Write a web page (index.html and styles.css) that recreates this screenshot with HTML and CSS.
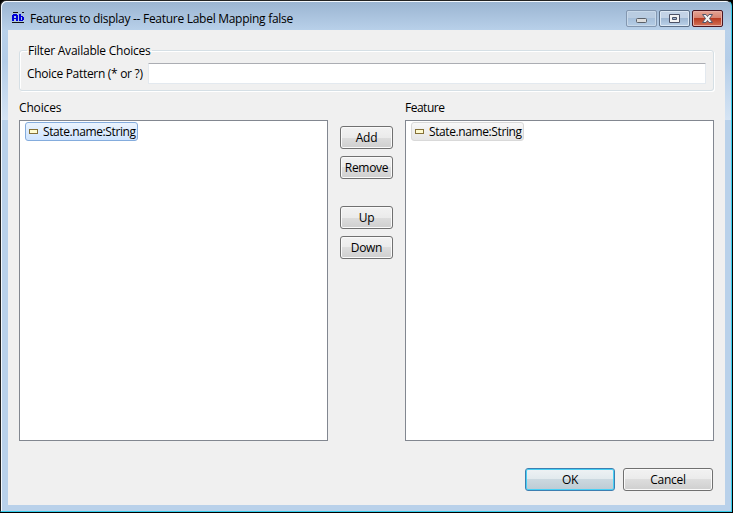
FILE: index.html
```html
<!DOCTYPE html>
<html lang="en">
<head>
<meta charset="utf-8">
<title>Features to display</title>
<link rel="stylesheet" href="styles.css">
</head>
<body>
<div class="window">
  <header class="titlebar">
    <svg class="app-icon" width="13" height="11" viewBox="0 0 13 11" shape-rendering="crispEdges">
      <path d="M1 .5h5M10 .5h2M0 10.500h12" stroke="#111" fill="none"/>
      <path d="M1 2h4v1h1v6h-2v-2h-2v2h-2v-6h1zM2 4v2h2v-2zM7 2h2v2h2v1h1v3h-1v1h-4zM9 5v3h1v-3z" fill="#0000d8" fill-rule="evenodd"/>
    </svg>
    <span class="t-title">Features to display -- Feature Label Mapping false</span>
    <div class="controls">
      <div class="ctl ctl-min"><svg width="29" height="15" viewBox="0 0 29 15"><rect x="9.500" y="7.500" width="10" height="4" rx="1" fill="#ddd" stroke="#5a6068"/></svg></div>
      <div class="ctl"><svg width="29" height="15" viewBox="0 0 29 15"><path d="M9.500 3.500h10v8h-10zM12.500 6.500v2h4v-2z" fill="#f4f4f4" stroke="#4c5266" fill-rule="evenodd"/></svg></div>
      <div class="ctl ctl-close"><svg width="29" height="15" viewBox="0 0 29 15"><path d="M9.500 3.500h3.500l1.500 2 1.500-2h3.500l-3 4 3 4h-3.500l-1.500-2-1.500 2h-3.500l3-4z" fill="#f2f2f2" stroke="#54566a"/></svg></div>
    </div>
  </header>
  <main class="client">
    <fieldset class="filter">
      <legend><span class="t-legend">Filter Available Choices</span></legend>
      <label class="filter-row"><span class="t-pattern">Choice Pattern (* or ?)</span><input type="text"></label>
    </fieldset>
    <div class="lists">
      <section class="col">
        <div class="caption"><span class="t-choices">Choices</span></div>
        <div class="list"><div class="item item-active"><i class="attr"></i><span class="t-item">State.name:String</span></div></div>
      </section>
      <div class="actions">
        <button class="btn"><span class="t-add">Add</span></button>
        <button class="btn"><span class="t-remove">Remove</span></button>
        <button class="btn btn-up"><span class="t-up">Up</span></button>
        <button class="btn"><span class="t-down">Down</span></button>
      </div>
      <section class="col">
        <div class="caption"><span class="t-feature">Feature</span></div>
        <div class="list"><div class="item"><i class="attr"></i><span class="t-item">State.name:String</span></div></div>
      </section>
    </div>
    <footer class="footer">
      <button class="btn btn-default"><span class="t-ok">OK</span></button>
      <button class="btn"><span class="t-cancel">Cancel</span></button>
    </footer>
  </main>
</div>
</body>
</html>
```
FILE: styles.css
```css
* { box-sizing: border-box; }
body { margin: 0; background: #000; overflow: hidden; font: 12px/16px "Open Sans", "Noto Sans", sans-serif; letter-spacing: -0.3px; color: #000; }
span { white-space: nowrap; }
.window { width: 732px; height: 512px; border: 1px solid #222; border-right-color: #35cdeb; border-bottom-color: #35cdeb; border-radius: 6px 6px 0 0; padding: 0 6px 6px; background: linear-gradient(#9ab4d1, #b9d1ea 30px, #b4cde8 60px, #d5e4f4 119px, #b9d1ea 119px); box-shadow: inset 1px 1px #f3f8fd; }
.titlebar { height: 29px; display: flex; align-items: flex-start; padding: 9px 2px 0 5px; }
.app-icon { margin: 2px 5px 0 0; }
.t-title { line-height: 18px; letter-spacing: -0.28px; }
.controls { display: flex; gap: 2px; margin-left: auto; }
.ctl { width: 31px; height: 17px; border: 1px solid #5d7088; border-radius: 2px; background: linear-gradient(#c3d3e6 50%, #9fb8d3 50%, #bbd2e9); box-shadow: inset 0 0 0 1px #dce8f4; }
.ctl svg { display: block; }
.ctl-min { border-color: #8397b0; background: linear-gradient(#b9cce1 50%, #a6bfda 50%, #b5cde6); box-shadow: inset 0 0 0 1px #c8d9ea; }
.ctl-close { border-color: #4b1520; background: linear-gradient(#e5a595, #d7806e 50%, #b93c22 50%, #d27258); box-shadow: inset 0 0 0 1px #e8aea4; }
.client { margin-left: 1px; width: 717px; height: 475px; background: #f0f0f0; padding: 13px 11px 0; }
.filter { margin: 0; height: 48px; border: 1px solid #d5dfe5; border-radius: 3px; padding: 5px 7px 0; box-shadow: inset 1px 1px #fff, 1px 1px #fff; }
legend { height: 15px; line-height: 16px; padding: 0 1px; letter-spacing: -0.22px; }
.filter-row { display: flex; align-items: center; }
.filter-row input { flex: 1; margin-left: 5px; height: 21px; border: 1px solid #e3e9ef; border-top-color: #abadb3; border-radius: 1px; padding: 0; background: #fff; }
.lists { display: flex; margin-top: 8px; }
.col { width: 309px; }
.caption { height: 21px; padding-top: 1px; }
.t-choices { letter-spacing: -0.15px; }
.t-feature { letter-spacing: -0.5px; }
.t-item { letter-spacing: -0.4px; }
.list { height: 321px; border: 1px solid #828790; background: #fff; padding: 1px 5px; }
.item { width: 113px; height: 19px; display: flex; align-items: center; border: 1px solid #d9d9d9; border-radius: 3px; background: linear-gradient(#f8f8f8, #e6e6e6); padding-left: 3px; }
.item-active { border-color: #84acdd; background: linear-gradient(#ebf4fe, #cfe4fe); }
.attr { width: 9px; height: 5px; border: 1px solid #857138; background: #fffbd0; margin-right: 5px; }
.actions { width: 53px; margin: 27px 12px 0; display: flex; flex-direction: column; gap: 7px; }
.btn { height: 23px; border: 1px solid #707070; border-radius: 3px; padding: 0; font: inherit; letter-spacing: inherit; color: #000; background: linear-gradient(#f2f2f2, #ebebeb 50%, #ddd 50%, #cfcfcf); box-shadow: inset 0 0 0 1px #fafafa; }
.btn-up { margin-top: 20px; }
.footer { display: flex; justify-content: flex-end; gap: 8px; margin: 27px 1px 0 0; }
.footer .btn { width: 90px; }
.footer .btn-default { border-color: #3c7fb1; background: linear-gradient(#eef2f4, #e1e9ed 50%, #cbd8df 50%, #bdcbd4); box-shadow: inset 0 0 0 1px #48d0f5; }
```
